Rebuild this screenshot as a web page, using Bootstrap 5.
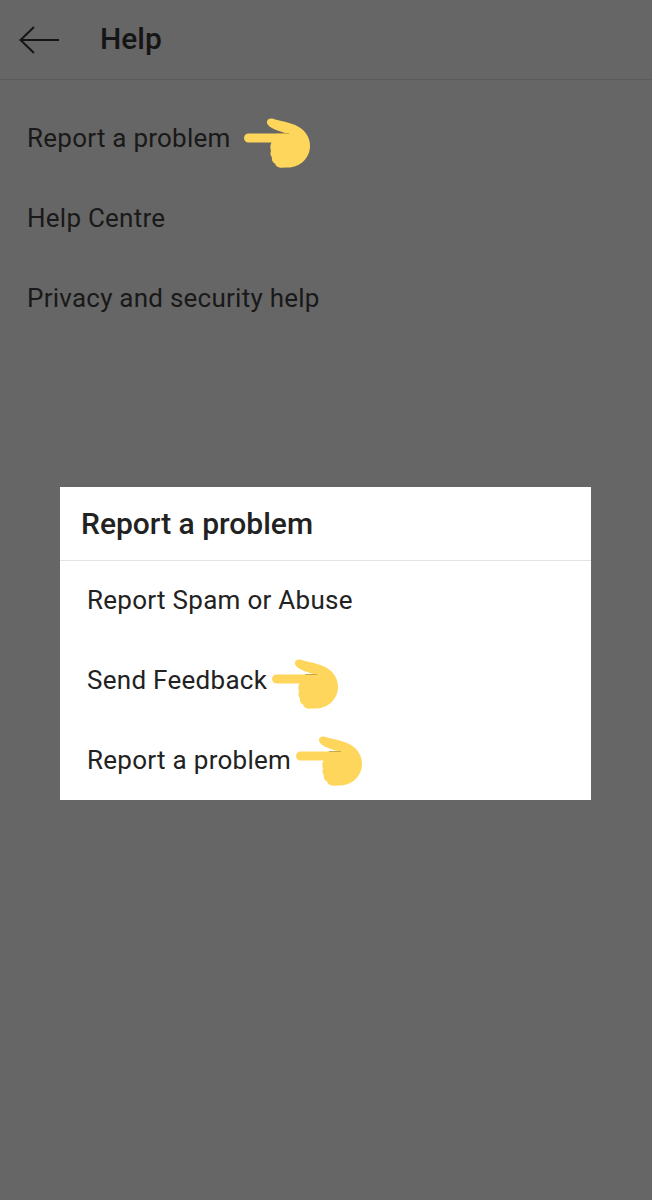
<!DOCTYPE html>
<html lang="en">
<head>
<meta charset="utf-8">
<title>Help</title>
<link href="https://cdn.jsdelivr.net/npm/bootstrap@5.3.0/dist/css/bootstrap.min.css" rel="stylesheet">
<style>
  body { background: #666; font-family: Roboto, "Liberation Sans", sans-serif; color: #191919; }
  .screen { width: 652px; height: 1200px; position: relative; overflow: hidden; background: #666; }
  .app-bar { height: 80px; padding: 0 0 2px 19px; border-bottom: 1px solid #5b5b5b; }
  .app-bar svg { width: 41px; height: 30px; margin: 2px 40px 0 0; }
  .app-bar h1 { font-size: 30px; font-weight: 500; margin: 0; color: #151515; line-height: 1; }
  .help-links { padding: 18px 0 0 27px; }
  .help-row { height: 80px; font-size: 26px; letter-spacing: .24px; display: flex; align-items: center; }
  .hand { width: 66px; height: 50px; flex: none; }
  .hand-a { margin: 9px 0 0 13px; }
  .hand-b { margin: 7px 0 0 5px; }
  .hand-c { margin: 0 0 0 5px; }
  .dialog-box { position: absolute; left: 60px; top: 487px; width: 531px; height: 313px; background: #fff; color: #222; }
  .dialog-head { height: 74px; padding-left: 21px; border-bottom: 1px solid #e3e3e3; font-size: 30px; font-weight: 500; line-height: 73px; }
  .dialog-row { height: 80px; padding: 0 0 1px 27px; font-size: 26px; letter-spacing: .28px; }
</style>
</head>
<body>
<svg width="0" height="0" class="d-block position-absolute">
  <defs>
    <!-- pointing hand used beside the menu entries -->
    <symbol id="point-hand" viewBox="0 0 66 50">
      <path fill="#ffd65c" d="M4.500 15.500H42C37 13.500 31 12 27 9.500 24 7.500 22.500 5.500 23 3.500 23.500 1 26 0 29 .8 37 3.500 47 4.500 54 8.500 62 13 66 20 66 28 66 40 56 49.500 44 49.500 41 49.500 38 50 35.500 49.500 33 49 31.500 47.500 31 45.500 28.500 44.500 27.500 42 28 39.500 26.500 37.500 26 34.500 27 32.500 26 30 26 27 27.500 24.500H4.500C2 24.500 0 22.500 0 20 0 17.500 2 15.500 4.500 15.500Z"/>
      <path fill="none" stroke="#c9a845" stroke-width="1" d="M33 15.500H45"/>
    </symbol>
  </defs>
</svg>

<div class="screen">
  <header class="app-bar d-flex align-items-center">
    <svg viewBox="0 0 41 30" fill="none" stroke="#151515" stroke-width="2" aria-hidden="true">
      <path d="M40 15H2M15 2 1.500 15 15 28"/>
    </svg>
    <h1>Help</h1>
  </header>

  <nav class="help-links">
    <div class="help-row">Report a problem<svg class="hand hand-a"><use href="#point-hand"/></svg></div>
    <div class="help-row">Help Centre</div>
    <div class="help-row">Privacy and security help</div>
  </nav>

  <div class="dialog-box">
    <div class="dialog-head">Report a problem</div>
    <div class="dialog-row d-flex align-items-center">Report Spam or Abuse</div>
    <div class="dialog-row d-flex align-items-center">Send Feedback<svg class="hand hand-b"><use href="#point-hand"/></svg></div>
    <div class="dialog-row d-flex align-items-center">Report a problem<svg class="hand hand-c"><use href="#point-hand"/></svg></div>
  </div>
</div>
<script src="https://cdn.jsdelivr.net/npm/bootstrap@5.3.0/dist/js/bootstrap.bundle.min.js"></script>
</body>
</html>
